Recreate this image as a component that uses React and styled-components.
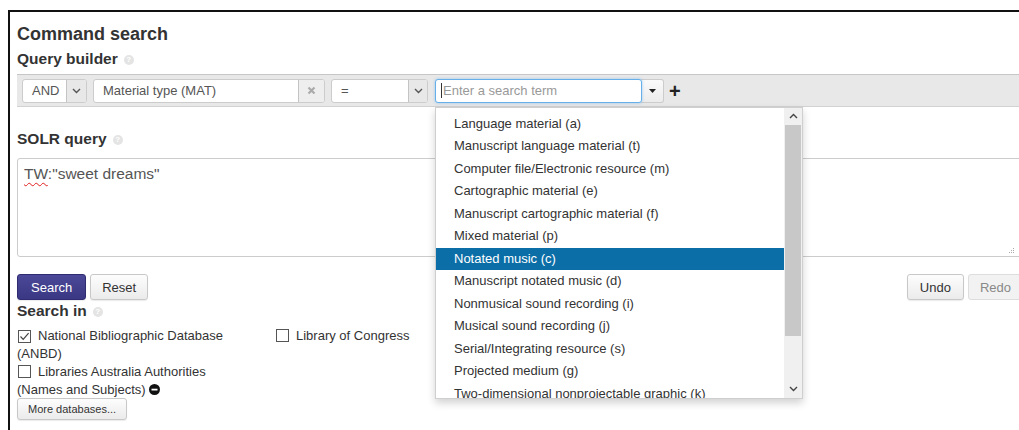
import React from 'react'
import styled, { createGlobalStyle } from 'styled-components'

const GlobalStyle = createGlobalStyle`
  html, body {
    margin: 0;
    overflow: hidden;
    background: #fff;
  }
  body {
    font-family: "Liberation Sans", Arial, sans-serif;
    color: #333;
  }
`

const materialTypes = [
  'Language material (a)',
  'Manuscript language material (t)',
  'Computer file/Electronic resource (m)',
  'Cartographic material (e)',
  'Manuscript cartographic material (f)',
  'Mixed material (p)',
  'Notated music (c)',
  'Manuscript notated music (d)',
  'Nonmusical sound recording (i)',
  'Musical sound recording (j)',
  'Serial/Integrating resource (s)',
  'Projected medium (g)',
  'Two-dimensional nonprojectable graphic (k)',
]

const Frame = styled.div`
  margin: 10px 0 0 8px;
  border-top: 2px solid #111;
  border-left: 2px solid #111;
  height: 420px;
  width: 1015px;
  padding: 11px 0 0 7px;
  box-sizing: border-box;
`

const Title = styled.h1`
  margin: 0;
  font-size: 18px;
  line-height: 22px;
  font-weight: bold;
  color: #333;
`

const SectionTitle = styled.h2`
  margin: ${p => p.$top || 0}px 0 0;
  font-size: 15.5px;
  line-height: 20px;
  font-weight: bold;
  color: #333;
  display: flex;
  align-items: center;
  gap: 6px;
`

const Help = styled.span`
  width: 10px;
  height: 10px;
  border-radius: 50%;
  background: #e4e4e4;
  color: #fff;
  font-size: 8px;
  line-height: 10px;
  text-align: center;
  font-weight: bold;
  margin-top: 2px;
`

const Toolbar = styled.div`
  margin-top: 5px;
  height: 31px;
  background: #e8e8e8;
  border-top: 1px solid #c6c6c6;
  border-bottom: 1px solid #d2d2d2;
  display: flex;
  align-items: center;
  padding-left: 5px;
  gap: 6px;
`

const Field = styled.div`
  position: relative;
  display: flex;
  height: 24px;
  width: ${p => p.$w}px;
  margin-right: ${p => p.$mr || 0}px;
  box-sizing: border-box;
  background: #fff;
  border: 1px solid ${p => (p.$focus ? '#66afe9' : '#ccc')};
  border-radius: 3px;
  box-shadow: ${p => (p.$focus ? '0 0 3px rgba(102,175,233,0.6)' : 'none')};
  font-size: 13px;
`

const FieldText = styled.span`
  flex: 1;
  padding-left: ${p => p.$pad || 9}px;
  line-height: 22px;
  color: ${p => (p.$placeholder ? '#999' : '#555')};
  white-space: nowrap;
  overflow: hidden;
`

const Caret = styled.span`
  display: inline-block;
  width: 1px;
  height: 15px;
  background: #333;
  vertical-align: -3px;
  margin-right: 1px;
`

const AddonBox = styled.span`
  width: ${p => p.$w || 18}px;
  border-left: 1px solid #c4c4c4;
  background: ${p => p.$bg || '#e4e4e4'};
  display: flex;
  align-items: center;
  justify-content: center;
  color: ${p => p.$color || '#666'};
  border-radius: 0 2px 2px 0;
`

const SplitButton = styled.span`
  width: 23px;
  height: 24px;
  box-sizing: border-box;
  margin-left: -7px;
  border: 1px solid #ccc;
  border-left: none;
  border-radius: 0 3px 3px 0;
  background: linear-gradient(#fafafa, #ececec);
  display: flex;
  align-items: center;
  justify-content: center;
`

const Plus = styled.span`
  font-size: 20px;
  font-weight: bold;
  color: #222;
  line-height: 20px;
  margin-left: -1px;
`

const Menu = styled.div`
  position: absolute;
  top: 27px;
  left: -1px;
  width: 368px;
  height: 292px;
  box-sizing: border-box;
  background: #fff;
  border: 1px solid #cfcfcf;
  box-shadow: 0 4px 8px rgba(0, 0, 0, 0.18);
  display: flex;
  z-index: 5;
`

const MenuList = styled.ul`
  list-style: none;
  margin: 0;
  padding: 5px 0 0;
  flex: 1;
  overflow: hidden;
`

const MenuItem = styled.li`
  height: 22.5px;
  line-height: 22px;
  padding-left: 18px;
  font-size: 13px;
  white-space: nowrap;
  color: ${p => (p.$active ? '#fff' : '#333')};
  background: ${p => (p.$active ? '#0b6ea7' : 'transparent')};
`

const ScrollTrack = styled.div`
  width: 18px;
  background: #f0f0f0;
  display: flex;
  flex-direction: column;
  align-items: center;
`

const ScrollArrow = styled.span`
  height: 17px;
  display: flex;
  align-items: center;
  justify-content: center;
`

const ScrollThumb = styled.span`
  width: 16px;
  height: 211px;
  background: #c8c8c8;
`

const ScrollRest = styled.span`
  flex: 1;
`

const QueryBox = styled.div`
  margin-top: 9px;
  height: 99px;
  box-sizing: border-box;
  border: 1px solid #ccc;
  border-radius: 3px;
  padding: 6px 6px;
  font-size: 15.5px;
  color: #555;
  position: relative;
`

const Misspelt = styled.span`
  text-decoration: underline wavy #e02020;
  text-decoration-thickness: 1px;
  text-underline-offset: 3px;
`

const Grip = styled.svg`
  position: absolute;
  right: 7px;
  bottom: 2px;
`

const ActionRow = styled.div`
  margin-top: 17px;
  display: flex;
  justify-content: space-between;
`

const ButtonGroup = styled.div`
  display: flex;
  gap: 4px;
`

const Button = styled.button`
  font-family: inherit;
  font-size: ${p => (p.$small ? 11 : 13)}px;
  height: ${p => (p.$small ? 22 : 26)}px;
  padding: 0 ${p => p.$px || 11}px;
  border-radius: 3px;
  cursor: pointer;
  border: 1px solid ${p => (p.$primary ? '#2f2c72' : p.$disabled ? '#ddd' : '#c8c8c8')};
  color: ${p => (p.$primary ? '#fff' : p.$disabled ? '#888' : '#333')};
  background: ${p =>
    p.$primary
      ? 'linear-gradient(#4b4898, #3a3783)'
      : p.$disabled
        ? '#f2f2f2'
        : 'linear-gradient(#fdfdfd, #ebebeb)'};
  box-shadow: ${p => (p.$disabled ? 'none' : '0 1px 1px rgba(0,0,0,0.08)')};
`

const SourceGrid = styled.div`
  margin-top: 6px;
  display: grid;
  grid-template-columns: 232px 250px;
  column-gap: 26px;
  font-size: 13px;
  line-height: 18px;
  color: #333;
`

const Source = styled.label`
  display: block;
`

const Box = styled.span`
  display: inline-flex;
  align-items: center;
  justify-content: center;
  width: 13px;
  height: 13px;
  box-sizing: border-box;
  border: 1px solid #555;
  background: #fff;
  vertical-align: -2px;
  margin: 0 7px 0 1px;
`

const RemoveIcon = styled.svg`
  vertical-align: -1px;
  margin-left: 3px;
`

const MoreRow = styled.div`
  margin-top: -1px;
`

const Check = ({ checked }) => (
  <Box>
    {checked && (
      <svg width="11" height="11" viewBox="0 0 11 11">
        <path d="M1.5 5.5 L4.2 8.3 L9.6 2.2" fill="none" stroke="#444" strokeWidth="1.2" />
      </svg>
    )}
  </Box>
)

const Chevron = ({ up, color = '#555' }) => (
  <svg width="9" height="6" viewBox="0 0 9 6">
    <path d={up ? 'M1 5 L4.5 1.5 L8 5' : 'M1 1 L4.5 4.5 L8 1'} fill="none" stroke={color} strokeWidth="1.4" />
  </svg>
)

const App = () => {
  return (
    <Frame>
      <GlobalStyle />
      <Title>Command search</Title>
      <SectionTitle $top={4}>
        Query builder <Help>?</Help>
      </SectionTitle>

      <Toolbar>
        <Field $w={65}>
          <FieldText>AND</FieldText>
          <AddonBox $w={19} $bg="#e8e8e8">
            <Chevron />
          </AddonBox>
        </Field>
        <Field $w={232}>
          <FieldText>Material type (MAT)</FieldText>
          <AddonBox $w={25} $bg="#eeeeee" $color="#aaa">
            <svg width="9" height="9" viewBox="0 0 9 9">
              <path d="M1.5 1.5 L7.5 7.5 M7.5 1.5 L1.5 7.5" stroke="#aaa" strokeWidth="2.2" />
            </svg>
          </AddonBox>
        </Field>
        <Field $w={97} $mr={1}>
          <FieldText>=</FieldText>
          <AddonBox $w={18} $bg="#e8e8e8">
            <Chevron />
          </AddonBox>
        </Field>
        <Field $w={207} $focus>
          <FieldText $placeholder $pad={5}>
            <Caret />
            Enter a search term
          </FieldText>
          <Menu>
            <MenuList>
              {materialTypes.map(t => (
                <MenuItem key={t} $active={t === 'Notated music (c)'}>
                  {t}
                </MenuItem>
              ))}
            </MenuList>
            <ScrollTrack>
              <ScrollArrow>
                <Chevron up color="#444" />
              </ScrollArrow>
              <ScrollThumb />
              <ScrollRest />
              <ScrollArrow>
                <Chevron color="#444" />
              </ScrollArrow>
            </ScrollTrack>
          </Menu>
        </Field>
        <SplitButton>
          <svg width="7" height="4" viewBox="0 0 7 4">
            <path d="M0 0 H7 L3.5 4 Z" fill="#222" />
          </svg>
        </SplitButton>
        <Plus>+</Plus>
      </Toolbar>

      <SectionTitle $top={22}>
        SOLR query <Help>?</Help>
      </SectionTitle>
      <QueryBox>
        <Misspelt>TW</Misspelt>:"sweet dreams"
        <Grip width="6" height="6" viewBox="0 0 6 6">
          <g fill="#aaa">
            <rect x="4" y="0" width="1" height="1" />
            <rect x="2" y="2" width="1" height="1" />
            <rect x="4" y="2" width="1" height="1" />
            <rect x="0" y="4" width="1" height="1" />
            <rect x="2" y="4" width="1" height="1" />
            <rect x="4" y="4" width="1" height="1" />
          </g>
        </Grip>
      </QueryBox>

      <ActionRow>
        <ButtonGroup>
          <Button $primary $px={13}>Search</Button>
          <Button>Reset</Button>
        </ButtonGroup>
        <ButtonGroup>
          <Button $px={12}>Undo</Button>
          <Button $disabled $px={11}>Redo</Button>
        </ButtonGroup>
      </ActionRow>

      <SectionTitle $top={1}>
        Search in <Help>?</Help>
      </SectionTitle>
      <SourceGrid>
        <Source>
          <Check checked />
          National Bibliographic Database (ANBD)
        </Source>
        <Source>
          <Check />
          Library of Congress
        </Source>
        <Source>
          <Check />
          Libraries Australia Authorities (Names and Subjects)
          <RemoveIcon width="11" height="11" viewBox="0 0 11 11">
            <circle cx="5.5" cy="5.5" r="5.5" fill="#111" />
            <rect x="2.5" y="4.7" width="6" height="1.8" fill="#fff" />
          </RemoveIcon>
        </Source>
      </SourceGrid>
      <MoreRow>
        <Button $small $px={10}>More databases...</Button>
      </MoreRow>
    </Frame>
  )
}

export default App
